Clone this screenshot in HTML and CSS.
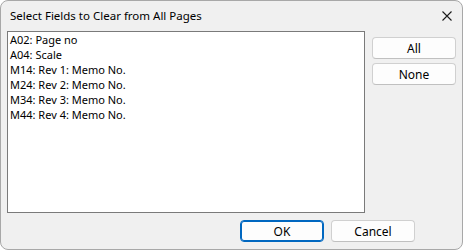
FILE: index.html
```html
<!DOCTYPE html>
<html lang="en">
<head>
    <meta charset="UTF-8">
    <title>Select Fields to Clear from All Pages</title>
    <link rel="stylesheet" href="styles.css">
</head>
<body>
    <div class="dialog">
        <!-- Title Bar -->
        <div class="title-bar">
            <span class="title">Select Fields to Clear from All Pages</span>
            <button class="close" aria-label="Close">
                <svg width="10" height="10" viewBox="0 0 10 10">
                    <path d="M0.5 0.5 L9.5 9.5 M9.5 0.5 L0.5 9.5" stroke="#1a1a1a" stroke-width="1.1" fill="none"/>
                </svg>
            </button>
        </div>

        <!-- Content -->
        <div class="content">
            <div class="field-list">
                <div class="item">A02: Page no</div>
                <div class="item">A04: Scale</div>
                <div class="item">M14: Rev 1: Memo No.</div>
                <div class="item">M24: Rev 2: Memo No.</div>
                <div class="item">M34: Rev 3: Memo No.</div>
                <div class="item">M44: Rev 4: Memo No.</div>
            </div>
            <div class="side-buttons">
                <button class="btn">All</button>
                <button class="btn">None</button>
            </div>
        </div>

        <!-- Footer -->
        <div class="footer">
            <button class="btn default">OK</button>
            <button class="btn">Cancel</button>
        </div>
    </div>
</body>
</html>
```

FILE: styles.css
```css
/* Page */
body {
    margin: 0;
    background: #ffffff;
    font-family: "Noto Sans", "Open Sans", sans-serif;
    font-size: 12px;
    color: #000;
}

/* Dialog Window */
.dialog {
    box-sizing: border-box;
    width: 463px;
    height: 250px;
    background: #f0f0f0;
    border: 1px solid #a8a8a8;
    border-radius: 8px;
    display: flex;
    flex-direction: column;
}

/* Title Bar */
.title-bar {
    height: 30px;
    display: flex;
    align-items: center;
    justify-content: space-between;
    padding: 0 10px 0 9px;
}

.title {
    font-size: 11.5px;
    line-height: 16px;
    margin-top: -1px;
}

.close {
    border: none;
    background: none;
    padding: 0;
    width: 10px;
    height: 10px;
    margin-top: -1px;
    display: flex;
}

/* Content */
.content {
    display: flex;
    gap: 7px;
    padding: 0 6px;
}

.field-list {
    box-sizing: border-box;
    width: 358px;
    height: 182px;
    background: #fff;
    border: 1px solid #7a7a7a;
    padding: 0 2px;
}

.item {
    height: 15px;
    font-size: 11px;
    line-height: 15px;
    white-space: nowrap;
}

.side-buttons {
    display: flex;
    flex-direction: column;
    gap: 4px;
    padding-top: 6px;
}

/* Buttons */
.btn {
    box-sizing: border-box;
    width: 84px;
    height: 22px;
    font-family: inherit;
    font-size: 12px;
    color: #000;
    background: #fdfdfd;
    border: 1px solid #d0d0d0;
    border-bottom-color: #c0c0c0;
    border-radius: 4px;
    padding: 0;
}

.btn.default {
    border: 1px solid #0067c0;
    box-shadow: inset 0 0 0 1px #0067c0;
    background: #fdfdfd;
}

/* Footer */
.footer {
    display: flex;
    justify-content: flex-end;
    gap: 7px;
    padding: 7px 47px 0 0;
}
```
